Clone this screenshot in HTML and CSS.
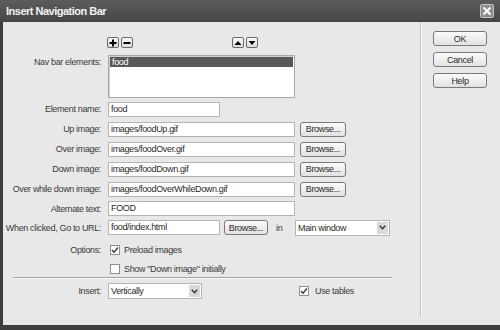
FILE: index.html
```html
<!DOCTYPE html>
<html lang="en">
<head>
    <meta charset="UTF-8">
    <title>Insert Navigation Bar</title>
    <link rel="stylesheet" href="styles.css">
</head>
<body>
    <div class="dialog">
        <div class="titlebar">
            <span class="title">Insert Navigation Bar</span>
            <span class="close-btn">
                <svg width="10" height="10" viewBox="0 0 10 10"><path d="M1.5 1.5 L8.5 8.5 M8.5 1.5 L1.5 8.5" stroke="#fff" stroke-width="2"/></svg>
            </span>
        </div>
        <div class="body">
            <div class="main">
                <div class="tools">
                    <span class="tool-btn"><svg width="8" height="8" viewBox="0 0 8 8"><path d="M4 0.5 V7.5 M0.5 4 H7.5" stroke="#000" stroke-width="2"/></svg></span>
                    <span class="tool-btn"><svg width="8" height="8" viewBox="0 0 8 8"><path d="M0.5 4 H7.5" stroke="#000" stroke-width="2"/></svg></span>
                    <span class="tool-gap"></span>
                    <span class="tool-btn"><svg width="8" height="8" viewBox="0 0 8 8"><path d="M0.5 6 L4 2 L7.5 6 Z" fill="#000"/></svg></span>
                    <span class="tool-btn"><svg width="8" height="8" viewBox="0 0 8 8"><path d="M0.5 2 L4 6 L7.5 2 Z" fill="#000"/></svg></span>
                </div>
                <div class="list-row">
                    <span class="label">Nav bar elements:</span>
                    <div class="listbox">
                        <div class="list-item selected">food</div>
                    </div>
                </div>
                <div class="row">
                    <span class="label">Element name:</span>
                    <span class="field short">food</span>
                </div>
                <div class="row">
                    <span class="label">Up image:</span>
                    <span class="field">images/foodUp.gif</span>
                    <span class="btn browse">Browse...</span>
                </div>
                <div class="row">
                    <span class="label">Over image:</span>
                    <span class="field">images/foodOver.gif</span>
                    <span class="btn browse">Browse...</span>
                </div>
                <div class="row">
                    <span class="label">Down image:</span>
                    <span class="field">images/foodDown.gif</span>
                    <span class="btn browse">Browse...</span>
                </div>
                <div class="row">
                    <span class="label">Over while down image:</span>
                    <span class="field">images/foodOverWhileDown.gif</span>
                    <span class="btn browse">Browse...</span>
                </div>
                <div class="row row-tight">
                    <span class="label">Alternate text:</span>
                    <span class="field">FOOD</span>
                </div>
                <div class="row row-tight">
                    <span class="label">When clicked, Go to URL:</span>
                    <span class="field short">food/index.html</span>
                    <span class="btn browse-small">Browse...</span>
                    <span class="in-text">in</span>
                    <span class="select target-select">Main window<span class="select-arrow"><svg width="7" height="5" viewBox="0 0 7 5"><path d="M0.8 0.8 L3.5 3.8 L6.2 0.8" stroke="#333" stroke-width="1.4" fill="none"/></svg></span></span>
                </div>
                <div class="row option-row">
                    <span class="label">Options:</span>
                    <span class="check checked"><svg width="8" height="8" viewBox="0 0 8 8"><path d="M1 4 L3 6.2 L7 1.5" stroke="#333" stroke-width="1.3" fill="none"/></svg></span>
                    <span class="check-text">Preload images</span>
                </div>
                <div class="row option-row-2">
                    <span class="label"></span>
                    <span class="check"></span>
                    <span class="check-text">Show "Down image" initially</span>
                </div>
                <div class="separator"></div>
                <div class="row insert-row">
                    <span class="label">Insert:</span>
                    <span class="select insert-select">Vertically<span class="select-arrow"><svg width="7" height="5" viewBox="0 0 7 5"><path d="M0.8 0.8 L3.5 3.8 L6.2 0.8" stroke="#333" stroke-width="1.4" fill="none"/></svg></span></span>
                    <span class="check checked tables-check"><svg width="8" height="8" viewBox="0 0 8 8"><path d="M1 4 L3 6.2 L7 1.5" stroke="#333" stroke-width="1.3" fill="none"/></svg></span>
                    <span class="check-text tables-text">Use tables</span>
                </div>
            </div>
            <div class="divider"></div>
            <div class="side">
                <span class="btn side-btn">OK</span>
                <span class="btn side-btn">Cancel</span>
                <span class="btn side-btn">Help</span>
            </div>
        </div>
    </div>
</body>
</html>
```

FILE: styles.css
```css
body {
    margin: 0;
    background-color: #3e3e3e;
    font-family: "Liberation Sans", Arial, sans-serif;
    font-size: 9px;
    letter-spacing: -0.35px;
    color: #3a3a3a;
}
.dialog {
    width: 500px;
    height: 330px;
    background-color: #3e3e3e;
}
.titlebar {
    height: 22px;
    display: flex;
    align-items: center;
    justify-content: space-between;
    padding: 0 6px;
    background: linear-gradient(#5c5c5c, #464646);
}
.title {
    color: #f2f2f2;
    font-size: 11px;
    font-weight: bold;
    letter-spacing: -0.5px;
}
.close-btn {
    width: 12px;
    height: 12px;
    display: flex;
    align-items: center;
    justify-content: center;
    background-color: #8c8c8c;
    border: 1px solid #c4c4c4;
    border-radius: 2px;
}
.body {
    height: 303px;
    margin-left: 3px;
    display: flex;
    background-color: #e8e8e8;
}
.main {
    width: 417px;
    padding-top: 15px;
}
.divider {
    width: 1px;
    height: 295px;
    background-color: #c2c2c2;
    border-right: 1px solid #f8f8f8;
}
.side {
    padding: 9px 0 0 11px;
    display: flex;
    flex-direction: column;
    gap: 6px;
}
.tools {
    height: 11px;
    display: flex;
    gap: 2px;
    margin: 0 0 7px 104px;
}
.tool-gap {
    width: 95px;
}
.tool-btn {
    width: 10px;
    height: 9px;
    display: flex;
    align-items: center;
    justify-content: center;
    background: linear-gradient(#fafafa, #dcdcdc);
    border: 1px solid #6a6a6a;
    border-radius: 2px;
}
.label {
    width: 98px;
    flex-shrink: 0;
    text-align: right;
    margin-right: 7px;
}
.list-row {
    display: flex;
    align-items: flex-start;
}
.list-row .label {
    margin-top: 2px;
}
.listbox {
    width: 183px;
    height: 39px;
    padding: 1px;
    background-color: #fff;
    border: 1px solid #a8a8a8;
    box-shadow: inset 1px 1px 0 #d0d0d0;
}
.list-item {
    height: 10px;
    line-height: 10px;
    padding-left: 2px;
}
.list-item.selected {
    background-color: #585858;
    color: #fff;
}
.row {
    height: 20px;
    display: flex;
    align-items: center;
}
.list-row + .row {
    margin-top: 1px;
}
.row-tight {
    height: 19px;
}
.field {
    width: 181px;
    height: 13px;
    line-height: 13px;
    padding: 0 2px;
    background-color: #fff;
    border: 1px solid #b4b4b4;
    color: #2a2a2a;
}
.field.short {
    width: 106px;
}
.btn {
    display: flex;
    align-items: center;
    justify-content: center;
    background: linear-gradient(#fbfbfb, #e2e2e2);
    border: 1px solid #7a7a7a;
    border-radius: 3px;
    color: #2a2a2a;
}
.browse {
    width: 44px;
    height: 13px;
    margin-left: 5px;
}
.browse-small {
    width: 42px;
    height: 13px;
    margin-left: 4px;
}
.in-text {
    margin-left: 8px;
    width: 19px;
}
.select {
    height: 14px;
    display: flex;
    align-items: center;
    justify-content: space-between;
    padding-left: 2px;
    background-color: #fff;
    border: 1px solid #b4b4b4;
    color: #2a2a2a;
}
.target-select {
    width: 91px;
}
.insert-select {
    width: 90px;
}
.select-arrow {
    width: 11px;
    height: 12px;
    margin-right: 1px;
    display: flex;
    align-items: center;
    justify-content: center;
    background-color: #d9d9d9;
}
.option-row {
    margin-top: 3px;
}
.option-row-2 {
    height: 17px;
}
.check {
    width: 8px;
    height: 8px;
    margin-left: 2px;
    display: flex;
    align-items: center;
    justify-content: center;
    background-color: #fff;
    border: 1px solid #8e8e8e;
}
.check-text {
    margin-left: 4px;
}
.separator {
    width: 379px;
    height: 1px;
    margin-left: 10px;
    background-color: #a4a4a4;
    border-bottom: 1px solid #fafafa;
}
.insert-row {
    height: 18px;
    margin-top: 3px;
}
.tables-check {
    margin-left: 97px;
}
.tables-text {
    margin-left: 6px;
}
.side-btn {
    width: 52px;
    height: 13px;
}
```
